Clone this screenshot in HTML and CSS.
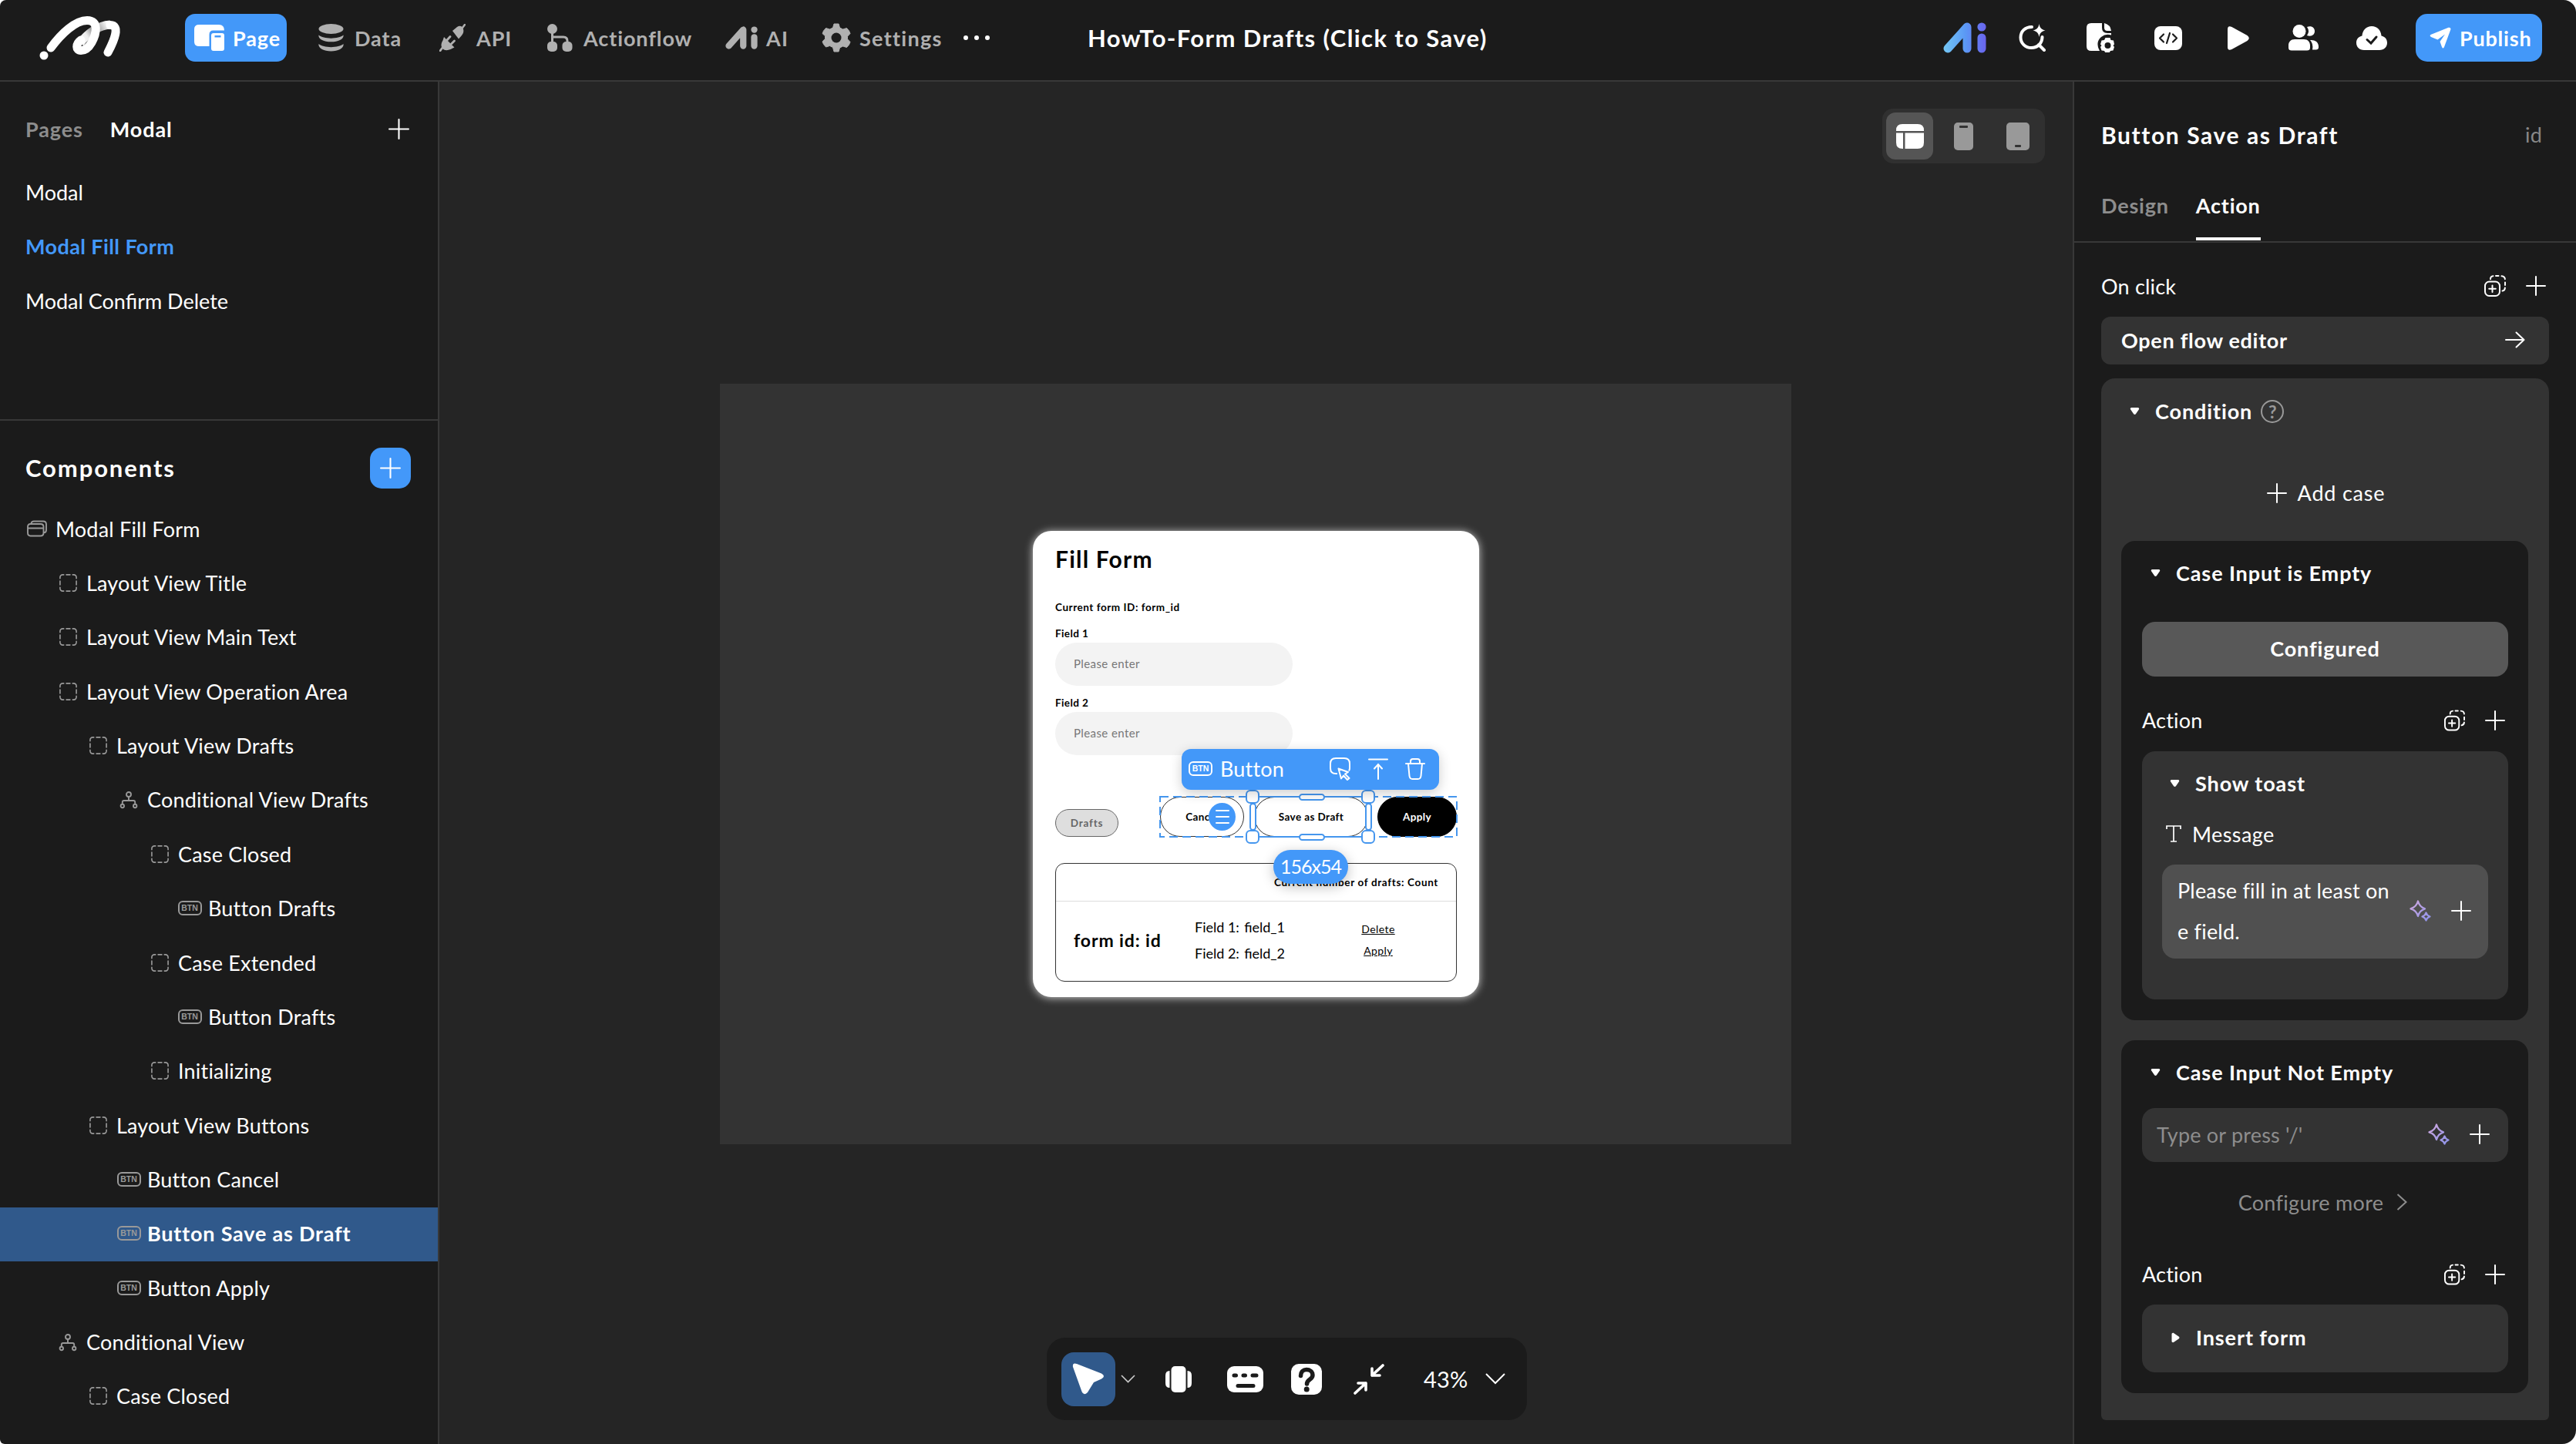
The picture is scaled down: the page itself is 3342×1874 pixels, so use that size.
FILE: index.html
```html
<!DOCTYPE html>
<html lang="en">

<head>
    <meta charset="UTF-8">
    <meta name="viewport" content="width=device-width, initial-scale=1.0">
    <title>HowTo-Form Drafts (Click to Save)</title>
    <link rel="stylesheet" href="styles.css">
</head>

<body>
    <!-- shared icons -->
    <svg class="sprite" width="0" height="0">
        <symbol id="i-plus" viewBox="0 0 26 26"><path d="M13 1v24M1 13h24" stroke="currentColor" stroke-width="2" stroke-linecap="round" fill="none"/></symbol>
        <symbol id="i-view" viewBox="0 0 26 26"><path d="M2 7V5.5A3.5 3.5 0 0 1 5.500 2H7M10.500 2h5M19 2h1.500A3.500 3.500 0 0 1 24 5.500V7M24 10.500v5M24 19v1.500A3.500 3.500 0 0 1 20.500 24H19M15.500 24h-5M7 24H5.500A3.500 3.500 0 0 1 2 20.500V19M2 15.500v-5" stroke="currentColor" stroke-width="1.700" stroke-linecap="round" fill="none"/></symbol>
        <symbol id="i-modal" viewBox="0 0 26 22"><path d="M5.500 4.500C5.500 2.500 7 1.500 9 1.500h12c2.500 0 4 1.500 4 4V13c0 2-1 3.300-3.500 3.500M4.500 5h13C20 5 21.500 6.200 21.500 8.500v8c0 2.500-1.500 4-4 4h-13C2.200 20.500 1 19 1 16.500v-8C1 6.200 2.200 5 4.500 5zM1 10.500h20.500" stroke="currentColor" stroke-width="1.900" fill="none"/></symbol>
        <symbol id="i-cond" viewBox="0 0 24 24"><g stroke="currentColor" stroke-width="1.900" fill="none"><circle cx="12" cy="5" r="3"/><circle cx="3.800" cy="20" r="2.200"/><circle cx="20.200" cy="20" r="2.200"/><path d="M12 8v5M3.800 17.500V15c0-1.300.700-2 2-2h12.400c1.300 0 2 .700 2 2v2.500"/></g></symbol>
        <symbol id="i-copy" viewBox="0 0 28 28"><g stroke="currentColor" stroke-width="2" stroke-linecap="round" fill="none"><rect x="1" y="8.500" width="19" height="18.500" rx="5.500"/><path d="M10.500 13.500v8.500M6.200 17.700h8.600M8 5.200C8 2.800 9 1.400 11.500 1.200M15 1h3.500M22.500 1.200c2.800.200 4.200 1.600 4.400 4M27 9.500V13M26.900 16.500c-.100 2.500-1.200 3.700-3.400 4"/></g></symbol>
        <symbol id="i-spark" viewBox="0 0 28 28"><g stroke="url(#violet)" stroke-width="2.300" stroke-linejoin="round" fill="none"><path d="M11 1.500c1.200 5 3.500 8 9 9.800-5.500 1.800-7.800 4.500-9 9.700-1.200-5.200-3.500-7.900-9.500-9.700C7.500 9.500 9.800 6.500 11 1.500zM21.500 16.500c.700 2.700 2 4 5 5-3 1-4.300 2.300-5 5-.700-2.700-2-4-5-5 3-1 4.300-2.300 5-5z"/></g></symbol>
        <symbol id="i-down" viewBox="0 0 14 12"><path d="M2.500 1h9c1.600 0 2.300 1.600 1.300 2.900l-4.300 6.300c-.800 1.100-2.200 1.100-3 0L1.200 3.900C.200 2.600.900 1 2.500 1z" fill="currentColor"/></symbol>
        <symbol id="i-right" viewBox="0 0 12 14"><path d="M1 2.500C1 1 2.500.200 3.800 1.200l6.300 4.300c1.200.900 1.200 2.100 0 3l-6.300 4.300C2.500 13.800 1 13 1 11.500z" fill="currentColor"/></symbol>
        <linearGradient id="violet" x1="0" y1="0" x2="1" y2="1"><stop offset="0" stop-color="#d0a8e0"/><stop offset="1" stop-color="#8d92e8"/></linearGradient>
        <linearGradient id="aiblue" gradientUnits="userSpaceOnUse" x1="0" y1="20" x2="56" y2="20"><stop offset="0" stop-color="#74c8f5"/><stop offset=".5" stop-color="#5b9af5"/><stop offset="1" stop-color="#6a63ee"/></linearGradient>
        <linearGradient id="fold" gradientUnits="userSpaceOnUse" x1="100" y1="58" x2="140" y2="32"><stop offset="0" stop-color="#fff"/><stop offset=".35" stop-color="#eee"/><stop offset=".6" stop-color="#888"/><stop offset="1" stop-color="#fff"/></linearGradient>
    </svg>

    <div class="app">
        <header class="topbar">
            <svg class="logo" width="110" height="60" viewBox="50 20 110 60" fill="none" stroke="#fff" stroke-width="11" stroke-linecap="round">
                <circle cx="57" cy="73" r="5.500" fill="#fff" stroke="none"/>
                <path d="M104 57C112 46 126 34 143 33" stroke="url(#fold)" stroke-linecap="butt"/>
                <path d="M143 33.500C156 33.500 149 52 140 69"/>
                <path d="M66 63C80 44 98 27.500 113 27.500C129 27.500 125 45 119 56C115 63 110 66.500 105 66.500C98 66.500 98 58 105 53"/>
            </svg>
            <nav class="nav">
                <a class="nav-item active">
                    <svg width="40" height="34" viewBox="0 0 40 34"><path d="M6 0h26q7 0 7 7.500H24.500Q19.500 7.500 19.500 13v15H6q-6 0-6-6V6q0-6 6-6z" fill="#fff"/><path fill-rule="evenodd" d="M25 11h11q3 0 3 3v17q0 3-3 3H25q-3 0-3-3V14q0-3 3-3zm1.500 3v2.500h8V14z" fill="#fff"/></svg>
                    Page</a>
                <a class="nav-item">
                    <svg width="33" height="36" viewBox="0 0 33 36" fill="currentColor"><ellipse cx="16.500" cy="6.500" rx="16" ry="6.500"/><path d="M.5 14.500c6 5.500 26 5.500 32 0 1 4.800-6 8.800-16 8.800s-17-4-16-8.800zM.5 26c6 5.500 26 5.500 32 0 1 5-6 9.500-16 9.500S-.500 31 .5 26z"/></svg>
                    Data</a>
                <a class="nav-item">
                    <svg width="34" height="36" viewBox="0 0 34 36" fill="currentColor"><path d="M17 9l6-5c3.500-2.500 7-1 8 2.500 1 3.500 0 6-2 8.500l-4 4.500z"/><path d="M30 5l3-4" stroke="currentColor" stroke-width="2.500" stroke-linecap="round"/><path d="M6 17l13.500 13.500-5 2.500C10 35 5.500 34.500 3.500 31c-2-3.500-.5-7 1-9.500z"/><path d="M3.500 31.500L1 35M10 21l4-4.500M15.500 26l4-4" stroke="currentColor" stroke-width="2.800" stroke-linecap="round"/></svg>
                    API</a>
                <a class="nav-item">
                    <svg width="34" height="36" viewBox="0 0 34 36"><g fill="currentColor"><circle cx="7.500" cy="6.500" r="6.500"/><rect x="1" y="23" width="13" height="13" rx="5"/><rect x="20.500" y="23" width="13" height="13" rx="5"/></g><path d="M7.500 8v18M7.500 17H22q5 0 5 5v3" stroke="currentColor" stroke-width="3" fill="none"/></svg>
                    Actionflow</a>
                <a class="nav-item tight">
                    <svg width="42" height="30" viewBox="0 0 56 40" stroke="currentColor" stroke-width="11" stroke-linecap="round"><path d="M6 34L31 6V34M50 19V34M50 6h.1" fill="none" stroke-linejoin="round"/></svg>
                    AI</a>
                <a class="nav-item tight">
                    <svg width="38" height="38" viewBox="0 0 38 38"><path d="M16 1h6l1.500 5 4 2 5-1.500 3 3.500 1.500 3.500-3.500 3.700v3.600l3.500 3.700-1.500 3.500-3 3.500-5-1.500-4 2L22 37h-6l-1.500-5.500-4-2-5 1.500-3-3.500L1 24l3.500-3.700v-3.600L1 13.500 2.500 10l3-3.500 5 1.500 4-2z" fill="currentColor" stroke="currentColor" stroke-linejoin="round"/><circle cx="19" cy="19" r="6.500" fill="#1b1b1b"/></svg>
                    Settings</a>
                <svg class="dots" width="36" height="8" viewBox="0 0 36 8" fill="#fff"><circle cx="4" cy="4" r="3"/><circle cx="18" cy="4" r="3"/><circle cx="32" cy="4" r="3"/></svg>
            </nav>
            <div class="project-name">HowTo-Form Drafts (Click to Save)</div>
            <div class="tools">
                <span class="tool"><svg width="56" height="40" viewBox="0 0 56 40" stroke="url(#aiblue)" stroke-width="11" stroke-linecap="round" stroke-linejoin="round" fill="none"><path d="M6 34L31 6V34M50 20V34M49.900 6h.2"/></svg></span>
                <span class="tool"><svg width="36" height="36" viewBox="0 0 36 36"><path d="M17 4C8 4 2.500 10 2.500 17.500S8.500 31 16.500 31 30.500 25 30.500 17M26 27l7 7" stroke="#fff" stroke-width="4" stroke-linecap="round" fill="none"/><path d="M26.500 0c1 5 2.500 7 8 8.500-5.500 1.500-7 3.500-8 8.500-1-5-2.500-7-8-8.500 5.500-1.500 7-3.500 8-8.500z" fill="#fff"/></svg></span>
                <span class="tool"><svg width="36" height="38" viewBox="0 0 36 38"><path d="M6 0h14v6q0 7 7 7h5v2.500q-7-2.500-13 2.500-8 7-2 18H6q-6 0-6-6V6q0-6 6-6zM23 0q8 2 9 10h-5q-4 0-4-4z" fill="#fff"/><path fill-rule="evenodd" d="M24.500 19h6l1 3 3.500.5 1 5-1.500 1.500 1.500 2-1.500 4.500-3.500.5-1.500 2.500h-5l-1.500-2.500-3.500-.5-1.500-4.500 1.500-2-1.500-1.500 1.500-5 3.500-.5zM27.500 25a4 4 0 1 0 0 8 4 4 0 1 0 0-8z" fill="#fff"/></svg></span>
                <span class="tool"><svg width="36" height="31" viewBox="0 0 36 31"><rect width="36" height="31" rx="8" fill="#fff"/><path d="M12 10.500L7 15.500l5 5M24 10.500l5 5-5 5M20 9l-4 13" stroke="#1b1b1b" stroke-width="2.200" stroke-linecap="round" stroke-linejoin="round" fill="none"/></svg></span>
                <span class="tool play"><svg width="28" height="31" viewBox="0 0 28 31"><path d="M0 4Q0-1.500 5.500 1L25.500 12q4.500 3.500 0 7L5.500 30Q0 32.500 0 27z" fill="#fff"/></svg></span>
                <span class="tool"><svg width="40" height="34" viewBox="0 0 40 34" fill="#fff"><circle cx="14" cy="8.500" r="8.500"/><path d="M8 19h12c5 0 8 3.500 8 8v3q0 3.500-4 3.500H4q-4 0-4-3.500v-3c0-4.500 3-8 8-8zM24 3c6-2 10 1 10 5.500S30 16 24 14q4-5.500 0-11zM28 20c6-.5 11 2.500 11 8v1.500q0 3-3.500 3H31q1.500-8-3-12.500z"/></svg></span>
                <span class="tool"><svg width="40" height="31" viewBox="0 0 40 31"><path d="M10 31C4 31 0 27 0 21.500c0-5 3-8 7.500-9C8 5 13 0 20 0s12 5 12.500 12.500c4.500 1 7.500 4 7.500 9C40 27 36 31 30 31z" fill="#fff"/><path d="M14 17.500l5 4.500 7-8" stroke="#1b1b1b" stroke-width="3" stroke-linecap="round" fill="none"/></svg></span>
                <button class="publish">
                    <svg width="28" height="28" viewBox="0 0 28 28"><path d="M1.500 10L24.500.8Q28 0 27.300 3.500L19 26q-1.500 3-3 0l-2.500-7 6.500-9.500-9.500 7-8.500-3.500q-2.500-1.500-.5-3z" fill="#fff"/></svg>
                    Publish</button>
            </div>
        </header>

        <div class="workspace">
            <aside class="sidebar">
                <section class="pages">
                    <div class="pages-head">
                        <span class="muted">Pages</span>
                        <span>Modal</span>
                        <svg class="push" width="27" height="27"><use href="#i-plus"/></svg>
                    </div>
                    <div class="page-row">Modal</div>
                    <div class="page-row current">Modal Fill Form</div>
                    <div class="page-row">Modal Confirm Delete</div>
                </section>
                <section class="components">
                    <div class="components-head">
                        <h2>Components</h2>
                        <button class="add"><svg width="27" height="27"><use href="#i-plus"/></svg></button>
                    </div>
                    <div class="node lvl-0"><i><svg width="26" height="22"><use href="#i-modal"/></svg></i>Modal Fill Form</div>
                    <div class="node lvl-1"><i><svg width="25" height="25"><use href="#i-view"/></svg></i>Layout View Title</div>
                    <div class="node lvl-1"><i><svg width="25" height="25"><use href="#i-view"/></svg></i>Layout View Main Text</div>
                    <div class="node lvl-1"><i><svg width="25" height="25"><use href="#i-view"/></svg></i>Layout View Operation Area</div>
                    <div class="node lvl-2"><i><svg width="25" height="25"><use href="#i-view"/></svg></i>Layout View Drafts</div>
                    <div class="node lvl-3"><i><svg width="24" height="24"><use href="#i-cond"/></svg></i>Conditional View Drafts</div>
                    <div class="node lvl-4"><i><svg width="25" height="25"><use href="#i-view"/></svg></i>Case Closed</div>
                    <div class="node lvl-5"><i><b class="btn-tag">BTN</b></i>Button Drafts</div>
                    <div class="node lvl-4"><i><svg width="25" height="25"><use href="#i-view"/></svg></i>Case Extended</div>
                    <div class="node lvl-5"><i><b class="btn-tag">BTN</b></i>Button Drafts</div>
                    <div class="node lvl-4"><i><svg width="25" height="25"><use href="#i-view"/></svg></i>Initializing</div>
                    <div class="node lvl-2"><i><svg width="25" height="25"><use href="#i-view"/></svg></i>Layout View Buttons</div>
                    <div class="node lvl-3"><i><b class="btn-tag">BTN</b></i>Button Cancel</div>
                    <div class="node lvl-3 selected"><i><b class="btn-tag">BTN</b></i>Button Save as Draft</div>
                    <div class="node lvl-3"><i><b class="btn-tag">BTN</b></i>Button Apply</div>
                    <div class="node lvl-1"><i><svg width="24" height="24"><use href="#i-cond"/></svg></i>Conditional View</div>
                    <div class="node lvl-2"><i><svg width="25" height="25"><use href="#i-view"/></svg></i>Case Closed</div>
                </section>
            </aside>

            <main class="canvas">
                <div class="devices">
                    <span class="device on"><svg width="36" height="32" viewBox="0 0 36 32" fill="#fff"><path d="M8 0h20q8 0 8 8v1H0V8q0-8 8-8zM0 11.500h9V32H8q-8 0-8-8zM11.500 11.500H36V24q0 8-8 8H11.500z"/></svg></span>
                    <span class="device"><svg width="25" height="36" viewBox="0 0 25 36"><rect width="25" height="36" rx="5" fill="#999"/><rect x="7" y="4" width="11" height="3" rx="1" fill="#333"/></svg></span>
                    <span class="device"><svg width="30" height="36" viewBox="0 0 30 36"><rect width="30" height="36" rx="5" fill="#999"/><rect x="11" y="29" width="8" height="3" rx="1" fill="#333"/></svg></span>
                </div>

                <div class="artboard">
                    <div class="modal">
                        <h1>Fill Form</h1>
                        <div class="form-id">Current form ID: form_id</div>
                        <label class="label">Field 1</label>
                        <div class="input">Please enter</div>
                        <label class="label second">Field 2</label>
                        <div class="input">Please enter</div>
                        <div class="buttons">
                            <span class="btn drafts">Drafts</span>
                            <div class="group">
                                <span class="btn cancel">Cancel</span>
                                <span class="btn save">Save as Draft</span>
                                <span class="btn apply">Apply</span>
                                <svg class="group-outline" width="387" height="54"><rect x="1" y="1" width="385" height="52" fill="none" stroke="#4596ee" stroke-width="2" stroke-dasharray="11 6"/></svg>
                                <span class="drag"><svg width="18" height="22" viewBox="0 0 18 22"><path d="M1 3h16M1 11h16M1 19h16" stroke="#fff" stroke-width="2" stroke-linecap="round"/></svg></span>
                                <div class="selection">
                                    <svg width="154" height="72" viewBox="0 0 154 72" stroke="#4596ee" stroke-width="2" fill="#fff">
                                        <rect x="5" y="10" width="149" height="52" fill="none"/>
                                    </svg>
                                    <span class="knob tl"></span><span class="knob tr"></span><span class="knob bl"></span><span class="knob br"></span>
                                    <span class="bar top"></span><span class="bar bottom"></span><span class="bar left"></span><span class="bar right"></span>
                                    <div class="size">156x54</div>
                                    <div class="sel-menu">
                                        <b class="btn-tag">BTN</b>
                                        <span>Button</span>
                                        <svg class="push" width="28" height="30" viewBox="0 0 28 30" fill="none" stroke="#fff" stroke-width="2" stroke-linejoin="round"><path d="M10 21H8q-7 0-7-7V8q0-7 7-7h11q7 0 7 7v6q0 2-1 3.500"/><path d="M11.500 14.500l12.500 4.500-4 2.500 5.500 5.500-2.500 2-5-5.500-3 4z"/></svg>
                                        <svg width="26" height="28" viewBox="0 0 26 28" fill="none" stroke="#fff" stroke-width="2" stroke-linecap="round"><path d="M1 1.500h24M13 27V9M8 13.500L13 8l5 5.500"/></svg>
                                        <svg width="26" height="28" viewBox="0 0 26 28" fill="none" stroke="#fff" stroke-width="2" stroke-linecap="round"><path d="M1 7h24M7 7V4q0-3 3-3h6q3 0 3 3v3M4 7l1.500 16q.5 4 4 4h7q3.500 0 4-4L22 7"/></svg>
                                    </div>
                                </div>
                            </div>
                        </div>
                        <div class="list">
                            <div class="list-head">Current number of drafts: Count</div>
                            <div class="list-row">
                                <strong>form id: id</strong>
                                <div class="fields">
                                    <div><span>Field 1:</span><span>field_1</span></div>
                                    <div><span>Field 2:</span><span>field_2</span></div>
                                </div>
                                <div class="links"><a>Delete</a><a>Apply</a></div>
                            </div>
                        </div>
                    </div>
                </div>

                <div class="dock">
                    <span class="pointer"><svg width="42" height="42" viewBox="0 0 42 42"><path d="M1 5Q0-1 6 1L38 13.500q6 3.500 0 7L28 25 20 38q-5 5-7.500-1z" fill="#fff"/></svg></span>
                    <svg class="chev-sm" width="19" height="11" viewBox="0 0 19 11"><path d="M1 1l8.500 8.500L18 1" stroke="#ccc" stroke-width="1.600" fill="none"/></svg>
                    <svg class="carousel" width="34" height="34" viewBox="0 0 34 34" fill="#fff"><rect x="7.500" width="19" height="34" rx="5"/><path d="M5.500 6v22Q0 28 0 22V12q0-6 5.500-6zM28.500 6v22q5.500 0 5.500-6V12q0-6-5.500-6z"/></svg>
                    <svg class="keyboard" width="47" height="34" viewBox="0 0 47 34"><rect width="47" height="34" rx="9" fill="#fff"/><path d="M9 12h2.500M21 12h2.500M33 12h5M14 25.500h20" stroke="#1b1b1b" stroke-width="5" stroke-linecap="round"/></svg>
                    <svg class="help" width="40" height="40" viewBox="0 0 40 40"><rect width="40" height="40" rx="10" fill="#fff"/><path d="M12.500 15.500c0-5.500 3.500-8 7.500-8s8 2.500 8 7c0 6-7.500 5.500-7.500 11.500" stroke="#1b1b1b" stroke-width="5.500" stroke-linecap="round" fill="none"/><circle cx="20.200" cy="33" r="3.500" fill="#1b1b1b"/></svg>
                    <svg class="shrink" width="42" height="42" viewBox="0 0 42 42"><path d="M39 3L25 16M25 7v9h10M3 39l14-13M7 26h10v9" stroke="#fff" stroke-width="3.600" stroke-linecap="round" stroke-linejoin="round" fill="none"/></svg>
                    <span class="zoom">43%</span>
                    <svg width="26" height="15" viewBox="0 0 26 15"><path d="M1 1l12 12L25 1" stroke="#fff" stroke-width="2" fill="none"/></svg>
                </div>
            </main>

            <aside class="inspector">
                <div class="inspector-head"><h2>Button Save as Draft</h2><span>id</span></div>
                <div class="tabs"><span class="tab">Design</span><span class="tab on">Action</span></div>
                <div class="inspector-body">
                    <div class="action-row first">On click
                        <svg class="push" width="28" height="28"><use href="#i-copy"/></svg>
                        <svg width="26" height="26"><use href="#i-plus"/></svg>
                    </div>
                    <div class="flow-link">Open flow editor
                        <svg width="26" height="22" viewBox="0 0 26 22"><path d="M1 11h23M14.500 1.500L24.500 11l-10 9.500" stroke="#fff" stroke-width="2" stroke-linecap="round" stroke-linejoin="round" fill="none"/></svg>
                    </div>
                    <div class="condition">
                        <div class="cond-head"><svg width="13" height="11"><use href="#i-down"/></svg>Condition
                            <span class="hint">?</span></div>
                        <div class="add-case"><svg width="26" height="26"><use href="#i-plus"/></svg>Add case</div>

                        <div class="case">
                            <div class="case-head"><svg width="13" height="11"><use href="#i-down"/></svg>Case Input is Empty</div>
                            <div class="configured">Configured</div>
                            <div class="action-row gap">Action
                                <svg class="push" width="27" height="28"><use href="#i-copy"/></svg>
                                <svg width="26" height="26"><use href="#i-plus"/></svg>
                            </div>
                            <div class="toast">
                                <div class="step-head"><svg width="13" height="11"><use href="#i-down"/></svg>Show toast</div>
                                <div class="message"><svg width="20" height="22" viewBox="0 0 20 22"><path d="M1 5V1h18v4M10 1v20M6 21h8" stroke="#fff" stroke-width="1.700" fill="none"/></svg>Message</div>
                                <div class="value filled">
                                    <span>Please fill in at least on<br>e field.</span>
                                    <svg class="push" width="28" height="28"><use href="#i-spark"/></svg>
                                    <svg width="26" height="26"><use href="#i-plus"/></svg>
                                </div>
                            </div>
                        </div>

                        <div class="case">
                            <div class="case-head"><svg width="13" height="11"><use href="#i-down"/></svg>Case Input Not Empty</div>
                            <div class="value">
                                <span class="ph">Type or press '/'</span>
                                <svg class="push" width="28" height="28"><use href="#i-spark"/></svg>
                                <svg width="26" height="26"><use href="#i-plus"/></svg>
                            </div>
                            <div class="more">Configure more
                                <svg width="14" height="22" viewBox="0 0 14 22"><path d="M1.500 1l11 10-11 10" stroke="currentColor" stroke-width="2" fill="none"/></svg>
                            </div>
                            <div class="action-row short">Action
                                <svg class="push" width="27" height="28"><use href="#i-copy"/></svg>
                                <svg width="26" height="26"><use href="#i-plus"/></svg>
                            </div>
                            <div class="insert"><svg width="13" height="14"><use href="#i-right"/></svg>Insert form</div>
                        </div>
                    </div>
                </div>
            </aside>
        </div>
    </div>
</body>

</html>
```
FILE: styles.css
```css
* {
    box-sizing: border-box;
}

body {
    margin: 0;
    background-color: #fff;
    color: #fff;
    font-family: Lato, "Open Sans", sans-serif;
    font-size: 27px;
    letter-spacing: 0.2px;
    white-space: nowrap;
}

h1,
h2 {
    margin: 0;
}

svg {
    display: block;
    flex-shrink: 0;
}

.sprite {
    position: absolute;
}

button {
    border: 0;
    padding: 0;
    color: #fff;
    font-family: inherit;
}

.push {
    margin-left: auto;
}

.app {
    width: 3342px;
    height: 1874px;
    overflow: hidden;
    display: flex;
    flex-direction: column;
    background-color: #1b1b1b;
    border-radius: 8px 16px 18px 6px;
}

/* Top bar */
.topbar {
    height: 106px;
    padding: 0 44px 6px 50px;
    display: flex;
    align-items: center;
    border-bottom: 2px solid #383838;
}

.logo {
    margin-right: 80px;
}

.nav {
    width: 1171px;
    display: grid;
    grid-template-columns: 173px 157px 139px 232px 125px 184px 36px;
    align-items: center;
}

.nav-item {
    display: flex;
    align-items: center;
    gap: 14px;
    height: 62px;
    color: #b0b0b0;
    font-weight: 700;
    letter-spacing: 0.9px;
}

.nav-item.tight {
    gap: 11px;
    letter-spacing: 1.3px;
}

.nav-item.active {
    width: 132px;
    padding-left: 12px;
    gap: 10px;
    color: #fff;
    background-color: #4398f9;
    border-radius: 13px;
}

.dots {
    margin-left: -1px;
}

.project-name {
    font-size: 31px;
    font-weight: 700;
    letter-spacing: 1.4px;
}

.tools {
    margin-left: auto;
    display: flex;
    align-items: center;
}

.tool {
    width: 88px;
    display: flex;
    justify-content: center;
}

.play {
    padding-left: 5px;
}

.publish {
    width: 164px;
    height: 62px;
    margin-left: 13px;
    padding-left: 18px;
    display: flex;
    align-items: center;
    gap: 11px;
    background-color: #4398f9;
    border-radius: 15px;
    font-size: 27px;
    font-weight: 700;
    letter-spacing: 0.8px;
}

.workspace {
    flex: 1;
    display: flex;
    min-height: 0;
}

/* Left sidebar */
.sidebar {
    width: 570px;
    border-right: 2px solid #383838;
}

.pages {
    height: 440px;
    border-bottom: 2px solid #383838;
}

.pages-head {
    height: 109px;
    padding: 13px 37px 0 33px;
    display: flex;
    align-items: center;
    gap: 35px;
    font-weight: 700;
    letter-spacing: 0.9px;
}

.muted {
    color: #8d8d8d;
}

.page-row {
    height: 70.3px;
    line-height: 70.3px;
    padding-left: 33px;
    letter-spacing: 0;
}

.page-row.current {
    color: #4398f9;
    font-weight: 700;
    letter-spacing: 0.4px;
}

.components-head {
    height: 106px;
    padding: 16px 35px 0 33px;
    display: flex;
    align-items: center;
    justify-content: space-between;
}

.components-head h2 {
    font-size: 31px;
    letter-spacing: 1.9px;
}

.add {
    width: 53px;
    height: 53px;
    display: flex;
    align-items: center;
    justify-content: center;
    background-color: #4398f9;
    border-radius: 15px;
}

.node {
    height: 70.36px;
    padding-bottom: 2px;
    display: flex;
    align-items: center;
}

.node i {
    width: 32px;
    margin-right: 8px;
    display: flex;
    justify-content: center;
    color: #999;
    font-style: normal;
}

.lvl-0 { padding-left: 32px; }
.lvl-1 { padding-left: 72px; }
.lvl-2 { padding-left: 111px; }
.lvl-3 { padding-left: 151px; }
.lvl-4 { padding-left: 191px; }
.lvl-5 { padding-left: 230px; }

.node.selected {
    background-color: #30598b;
    font-weight: 700;
    letter-spacing: 0.8px;
}

.btn-tag {
    width: 31px;
    height: 19px;
    border: 2px solid currentColor;
    border-radius: 6px;
    font-family: "Liberation Sans", sans-serif;
    font-size: 10.5px;
    line-height: 15px;
    text-align: center;
    letter-spacing: 0;
}

/* Canvas */
.canvas {
    flex: 1;
    background-color: #252525;
}

.devices {
    width: 211px;
    height: 71px;
    margin: 35px 36px 0 auto;
    padding: 5px;
    display: flex;
    justify-content: space-between;
    background-color: #303030;
    border-radius: 14px;
}

.device {
    width: 61px;
    height: 61px;
    display: flex;
    align-items: center;
    justify-content: center;
    border-radius: 12px;
}

.device.on {
    background-color: #555;
}

.artboard {
    width: 1390px;
    height: 987px;
    margin: 286px 0 0 364px;
    padding: 191px 0 0 406px;
    background-color: #333;
}

.modal {
    width: 579px;
    height: 605px;
    padding: 16px 29px 0;
    background-color: #fff;
    border-radius: 24px;
    box-shadow: 0 1px 11px rgba(255, 255, 255, 0.75);
    color: #000;
    font-size: 13.5px;
    letter-spacing: 0.4px;
}

.modal h1 {
    font-size: 30px;
    line-height: 41px;
    letter-spacing: 1.2px;
}

.form-id {
    margin-top: 32px;
    line-height: 20px;
    font-weight: 700;
    letter-spacing: 0.55px;
}

.label {
    display: block;
    margin-top: 14px;
    line-height: 20px;
    font-weight: 700;
}

.label.second {
    margin-top: 12px;
}

.input {
    width: 308px;
    height: 56px;
    margin-top: 2px;
    padding-left: 24px;
    line-height: 55px;
    font-size: 15px;
    color: #777;
    background-color: #f3f3f3;
    border-radius: 28px;
}

.buttons {
    height: 52px;
    margin-top: 54px;
    display: flex;
    align-items: flex-end;
}

.btn {
    height: 52px;
    padding-bottom: 1px;
    display: flex;
    align-items: center;
    justify-content: center;
    border: 1.5px solid #333;
    border-radius: 26px;
    font-weight: 700;
}

.drafts {
    width: 82px;
    height: 36px;
    margin-right: 54px;
    color: #666;
    background-color: #dedede;
    border-color: #666;
    letter-spacing: 0.8px;
}

.group {
    position: relative;
    display: flex;
}

.cancel {
    width: 109px;
    margin-right: 13px;
}

.save {
    width: 148px;
    margin-right: 12px;
}

.apply {
    width: 103px;
    color: #fff;
    background-color: #000;
    border-color: #000;
}

/* selection handles lie over the buttons */
.group-outline {
    position: absolute;
    left: -1px;
    top: -1px;
}

.drag {
    position: absolute;
    left: 63px;
    top: 8px;
    width: 35px;
    height: 36px;
    display: flex;
    align-items: center;
    justify-content: center;
    background-color: #4398f9;
    border-radius: 50%;
}

.selection {
    position: absolute;
    left: 111px;
    top: -10px;
    width: 167px;
    height: 72px;
}

.selection > svg {
    margin-left: 4px;
    overflow: visible;
}

.knob,
.bar {
    position: absolute;
    background-color: #fff;
    border: 2px solid #4596ee;
}

.knob {
    width: 18px;
    height: 18px;
    border-radius: 6px;
}

.tl { left: 0; top: 1px; }
.tr { left: 150px; top: 1px; }
.bl { left: 0; top: 53px; }
.br { left: 150px; top: 53px; }

.bar {
    border-radius: 5px;
}

.top { left: 69px; top: 6px; width: 34px; height: 9px; }
.bottom { left: 69px; top: 58px; width: 34px; height: 9px; }
.left { left: 5px; top: 18px; width: 9px; height: 36px; }
.right { left: 155px; top: 18px; width: 9px; height: 36px; }

.size {
    position: absolute;
    left: 36px;
    top: 79px;
    width: 97px;
    height: 44px;
    border-radius: 22px;
    background-color: #4398f9;
    box-shadow: 0 4px 16px rgba(0, 0, 0, 0.25);
    color: #fff;
    font-size: 25px;
    line-height: 42px;
    text-align: center;
    letter-spacing: -1px;
}

.sel-menu {
    position: absolute;
    left: -83px;
    top: -52px;
    width: 334px;
    height: 53px;
    padding: 0 18px 2px 9px;
    display: flex;
    align-items: center;
    gap: 22px;
    background-color: #4398f9;
    border-radius: 12px;
    box-shadow: 0 4px 16px rgba(0, 0, 0, 0.2);
    color: #fff;
    font-size: 27px;
    letter-spacing: 0.2px;
}

.sel-menu span {
    margin-left: -12px;
}

.list {
    height: 154px;
    margin-top: 34px;
    border: 1.5px solid #333;
    border-radius: 12px;
}

.list-head {
    height: 49px;
    padding-right: 23px;
    border-bottom: 1px solid #ddd;
    line-height: 49px;
    text-align: right;
    font-weight: 700;
    letter-spacing: 0.65px;
}

.list-row {
    height: 103px;
    padding: 0 0 3px 23px;
    display: flex;
    align-items: center;
}

.list-row strong {
    width: 157px;
    font-size: 23px;
    letter-spacing: 0.9px;
}

.fields {
    width: 117px;
    font-size: 18px;
    line-height: 34px;
    letter-spacing: 0;
}

.fields div {
    display: flex;
    justify-content: space-between;
}

.links {
    width: 40px;
    margin-left: 101px;
    display: flex;
    flex-direction: column;
    align-items: center;
    font-size: 14px;
    line-height: 28px;
    text-decoration: underline;
}

.dock {
    width: 623px;
    height: 107px;
    margin: 251px 0 0 788px;
    padding-left: 19px;
    display: flex;
    align-items: center;
    background-color: #1b1b1b;
    border-radius: 24px;
}

.pointer {
    width: 70px;
    height: 70px;
    display: flex;
    align-items: center;
    justify-content: center;
    background-color: #30598b;
    border-radius: 16px;
}

.chev-sm { margin: 0 39px 0 7px; }
.carousel { margin-right: 46px; }
.keyboard { margin-right: 36px; }
.help { margin-right: 40px; }

.zoom {
    width: 80px;
    margin: 0 0 0 50px;
    font-size: 29px;
}

/* Right inspector */
.inspector {
    width: 653px;
    border-left: 2px solid #383838;
}

.inspector-head {
    height: 140px;
    padding: 0 44px 3px 35px;
    display: flex;
    align-items: center;
    justify-content: space-between;
}

.inspector-head h2 {
    font-size: 30px;
    letter-spacing: 1.6px;
}

.inspector-head span {
    color: #888;
}

.tabs {
    height: 69px;
    padding-left: 35px;
    display: flex;
    gap: 35px;
    border-bottom: 2px solid #383838;
    font-weight: 700;
    letter-spacing: 0.8px;
}

.tab {
    height: 66px;
    line-height: 42px;
    color: #8d8d8d;
}

.tab.on {
    color: #fff;
    border-bottom: 4px solid #fff;
}

.inspector-body {
    padding: 0 35px;
}

.action-row {
    display: flex;
    align-items: center;
    gap: 26px;
}

.first {
    height: 96px;
    padding: 16px 4px 0 0;
}

.gap {
    height: 97px;
    padding: 16px 4px 0 0;
}

.short {
    height: 79px;
    padding-right: 4px;
}

.flow-link {
    height: 62px;
    padding: 0 31px 2px 26px;
    display: flex;
    align-items: center;
    justify-content: space-between;
    background-color: #333;
    border-radius: 12px;
    font-weight: 700;
    letter-spacing: 0.7px;
}

.condition {
    height: 1352px;
    margin-top: 18px;
    padding: 0 27px 0 26px;
    background-color: #333;
    border-radius: 18px 18px 6px 6px;
}

.cond-head,
.case-head,
.step-head,
.insert {
    padding-bottom: 3px;
    display: flex;
    align-items: center;
    gap: 20px;
    font-weight: 700;
    letter-spacing: 0.9px;
}

.cond-head {
    height: 88px;
    padding-left: 11px;
}

.hint {
    width: 30px;
    height: 30px;
    margin-left: -9px;
    border: 2px solid #999;
    border-radius: 50%;
    color: #999;
    font-size: 23px;
    line-height: 26px;
    text-align: center;
    letter-spacing: 0;
}

.add-case {
    height: 123px;
    padding: 0 0 2px 3px;
    display: flex;
    align-items: center;
    justify-content: center;
    gap: 14px;
    letter-spacing: 0.8px;
}

.case {
    margin-bottom: 26px;
    padding: 0 26px 27px 27px;
    background-color: #1b1b1b;
    border-radius: 18px;
}

.case-head {
    height: 86px;
    padding-left: 11px;
}

.configured {
    height: 71px;
    margin-top: 19px;
    line-height: 69px;
    text-align: center;
    font-weight: 700;
    letter-spacing: 0.9px;
    background-color: #585858;
    border-radius: 17px;
}

.toast {
    height: 322px;
    padding: 0 26px;
    background-color: #333;
    border-radius: 17px;
}

.step-head {
    height: 86px;
    padding-left: 10px;
}

.message {
    height: 44px;
    padding: 0 0 2px 5px;
    display: flex;
    align-items: center;
    gap: 14px;
    letter-spacing: 0.4px;
}

.value {
    height: 70px;
    margin-top: 2px;
    padding: 0 24px 2px 19px;
    display: flex;
    align-items: center;
    gap: 26px;
    background-color: #333;
    border-radius: 17px;
}

.value.filled {
    height: 122px;
    margin-top: 17px;
    padding-right: 26px;
    padding-left: 20px;
    line-height: 53px;
    background-color: #505050;
}

.ph,
.more {
    color: #8d8d8d;
}

.more {
    height: 106px;
    display: flex;
    align-items: center;
    justify-content: center;
    gap: 17px;
    padding: 0 6px 2px 0;
    letter-spacing: 0.3px;
}

.insert {
    height: 88px;
    padding-left: 37px;
    background-color: #333;
    border-radius: 17px;
}
```
